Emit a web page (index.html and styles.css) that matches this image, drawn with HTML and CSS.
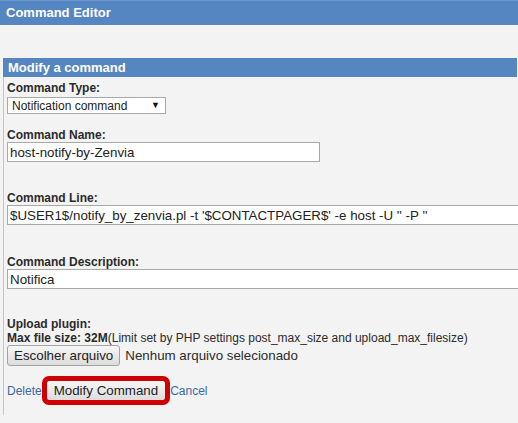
FILE: index.html
```html
<!DOCTYPE html>
<html lang="pt">
  <head>
    <meta charset="UTF-8" />
    <title>Command Editor</title>
    <link rel="stylesheet" href="styles.css">
  </head>
  <body>
    <header class="page-header">Command Editor</header>

    <section class="panel">
      <h2 class="panel-title">Modify a command</h2>

      <form class="panel-body">
        <div class="field field-type">
          <label class="field-label">Command Type:</label>
          <span class="select-wrap">
            <select class="select">
              <option>Notification command</option>
            </select>
          </span>
        </div>

        <div class="field field-name">
          <label class="field-label">Command Name:</label>
          <input class="text-input input-short" type="text" value="host-notify-by-Zenvia" />
        </div>

        <div class="field field-line">
          <label class="field-label">Command Line:</label>
          <input class="text-input input-long" type="text" value="$USER1$/notify_by_zenvia.pl -t '$CONTACTPAGER$' -e host -U '' -P ''" />
        </div>

        <div class="field field-desc">
          <label class="field-label">Command Description:</label>
          <input class="text-input input-long" type="text" value="Notifica" />
        </div>

        <div class="upload">
          <div class="field-label">Upload plugin:</div>
          <div class="upload-note"><strong>Max file size: 32M</strong>(Limit set by PHP settings post_max_size and upload_max_filesize)</div>
          <div class="file-row">
            <button class="btn" type="button">Escolher arquivo</button>
            <span class="file-name">Nenhum arquivo selecionado</span>
          </div>
        </div>

        <div class="actions">
          <a href="#">Delete</a>
          <button class="btn btn-marked" type="button">Modify Command</button>
          <a href="#">Cancel</a>
        </div>
      </form>
    </section>
  </body>
</html>
```

FILE: styles.css
```css
*,
*::before,
*::after {
  box-sizing: border-box;
}
:root {
  --bg: #f3f3f3;
  --bar: #5686c1;
  --text: #2b2b2b;
  --link: #3b69a6;
  --field-border: #a9a9a9;
}
body {
  margin: 0;
  overflow: hidden;
  font-family: "Liberation Sans", Arial, sans-serif;
  font-size: 12px;
  line-height: 14px;
  background: var(--bg);
  color: var(--text);
}
a {
  color: var(--link);
  text-decoration: none;
}
.page-header {
  height: 25px;
  padding-left: 6px;
  background: var(--bar);
  border-top: 1px solid #6b97cb;
  color: #fff;
  font-size: 13px;
  font-weight: bold;
  line-height: 23px;
}
.panel {
  margin: 33px 1px 0 3px;
}
.panel-title {
  margin: 0;
  height: 19px;
  padding-left: 5px;
  background: var(--bar);
  color: #fff;
  font-size: 13px;
  font-weight: bold;
  line-height: 19px;
}
.panel-body {
  border-left: 1px solid #c4c4c4;
  padding: 4px 0 14px 3px;
}
.field-label {
  display: block;
  font-weight: bold;
}
.field-type {
  margin-bottom: 14px;
}
.field-name {
  margin-bottom: 29px;
}
.field-line {
  margin-bottom: 30px;
}
.field-desc {
  margin-bottom: 28px;
}
.select-wrap {
  position: relative;
  display: block;
  width: 159px;
  margin-top: 2px;
}
.select-wrap::after {
  content: "▼";
  position: absolute;
  right: 6px;
  top: 4px;
  font-size: 9px;
  line-height: 9px;
  color: #111;
  pointer-events: none;
}
.select {
  appearance: none;
  display: block;
  width: 100%;
  height: 17px;
  margin: 0;
  padding: 0 0 0 4px;
  border: 1px solid var(--field-border);
  border-radius: 0;
  background: #fff;
  color: #222;
  font-family: inherit;
  font-size: 12px;
}
.text-input {
  display: block;
  height: 20px;
  margin: 0;
  padding: 1px 2px;
  border: 1px solid var(--field-border);
  background: #fff;
  color: #222;
  font-family: inherit;
  font-size: 13.33px;
}
.input-short {
  width: 313px;
}
.input-long {
  width: 600px;
}
.upload-note strong {
  font-weight: bold;
}
.file-row {
  display: flex;
  align-items: center;
  gap: 5px;
  font-size: 13.33px;
}
.btn {
  height: 21px;
  margin: 0;
  padding: 0 6px;
  border: 1px solid #a3a3a3;
  border-radius: 3px;
  background: linear-gradient(#f7f7f7, #dcdcdc);
  color: #222;
  font-family: inherit;
  font-size: 13.33px;
  line-height: 19px;
}
.actions {
  display: flex;
  align-items: center;
  gap: 4px;
  margin-top: 14px;
}
.btn-marked {
  padding: 0 7px;
  outline: 5px solid #d00000;
  outline-offset: -1px;
}
```
